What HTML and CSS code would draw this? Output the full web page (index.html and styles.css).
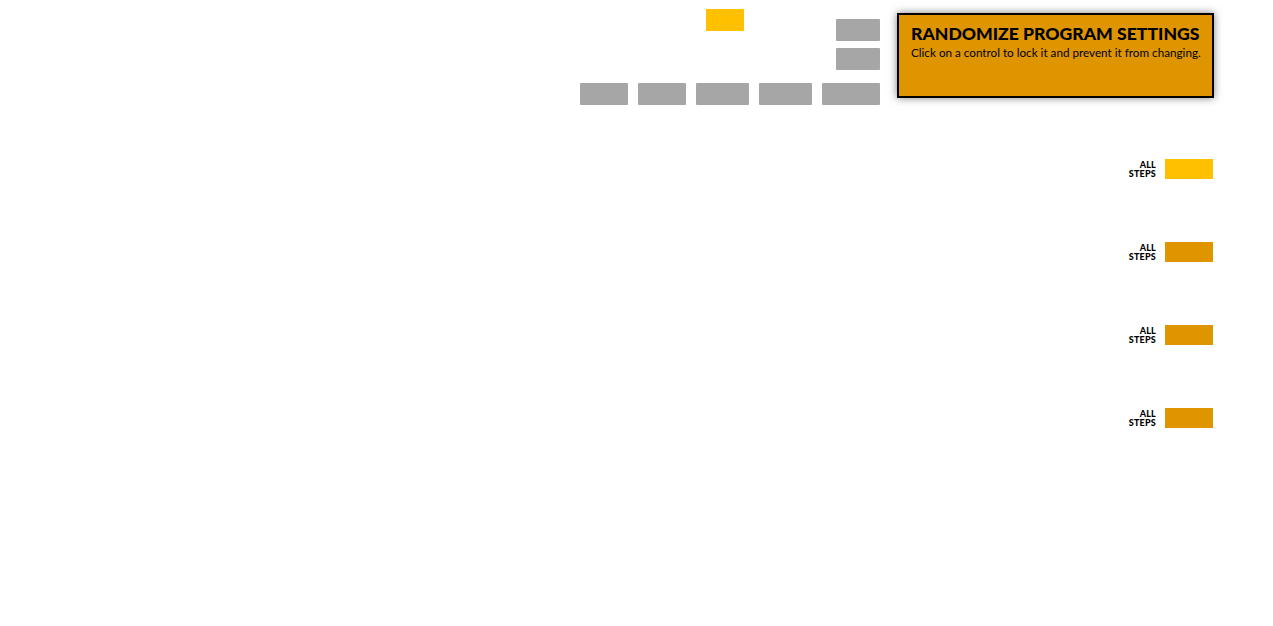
FILE: index.html
```html
<!DOCTYPE html>
<html>
<head>
<meta charset="utf-8">
<link rel="stylesheet" href="styles.css">
</head>
<body>
<div class="page">
  <div class="top">
    <div class="cluster">
      <div class="upper">
        <div class="btn yellow"></div>
        <div class="stack">
          <div class="btn gray w44"></div>
          <div class="btn gray w44"></div>
        </div>
      </div>
      <div class="row">
        <div class="btn gray w48"></div>
        <div class="btn gray w48"></div>
        <div class="btn gray w53"></div>
        <div class="btn gray w53"></div>
        <div class="btn gray w58"></div>
      </div>
    </div>
    <div class="panel">
      <div class="title">RANDOMIZE PROGRAM SETTINGS</div>
      <div class="sub">Click on a control to lock it and prevent it from changing.</div>
    </div>
  </div>
  <div class="steps">
    <div class="step"><div class="lbl">ALL<br>STEPS</div><div class="box bright"></div></div>
    <div class="step"><div class="lbl">ALL<br>STEPS</div><div class="box"></div></div>
    <div class="step"><div class="lbl">ALL<br>STEPS</div><div class="box"></div></div>
    <div class="step"><div class="lbl">ALL<br>STEPS</div><div class="box"></div></div>
  </div>
</div>
</body>
</html>
```

FILE: styles.css
```css
html, body {
  margin: 0;
  padding: 0;
  background: #ffffff;
}
.page {
  width: 1273px;
  height: 626px;
  font-family: "Lato", "Liberation Sans", sans-serif;
}
.top {
  display: flex;
  padding-left: 580px;
}
.cluster {
  width: 300px;
  padding-top: 9px;
  display: flex;
  flex-direction: column;
}
.upper {
  display: flex;
  align-items: flex-start;
}
.btn {
  height: 22px;
  border-radius: 1px;
}
.yellow {
  width: 38px;
  background: #ffc000;
  margin-left: 126px;
}
.gray {
  background: #a6a6a6;
}
.stack {
  margin-left: auto;
  margin-top: 10px;
  display: flex;
  flex-direction: column;
  gap: 7px;
}
.w44 { width: 44px; }
.w48 { width: 48px; }
.w53 { width: 53px; }
.w58 { width: 58px; }
.row {
  display: flex;
  gap: 10px;
  margin-top: 13px;
}
.panel {
  margin-left: 17px;
  margin-top: 13px;
  width: 313px;
  height: 81px;
  border: 2px solid #000;
  background: #de9500;
  box-shadow: 0 0 8px rgba(0,0,0,0.5);
  box-sizing: content-box;
  padding: 0;
}
.title {
  margin: 9px 0 0 12px;
  font-weight: 900;
  font-size: 17.6px;
  line-height: 20px;
  color: #000;
  white-space: nowrap;
}
.sub {
  margin: 1px 0 0 12px;
  font-size: 11.7px;
  line-height: 14px;
  color: #000;
  white-space: nowrap;
}
.steps {
  display: flex;
  flex-direction: column;
  align-items: flex-end;
  padding-right: 60px;
  margin-top: 54px;
  gap: 63px;
}
.step {
  display: flex;
  align-items: center;
  gap: 9px;
  height: 20px;
}
.lbl {
  font-weight: 900;
  font-size: 9px;
  line-height: 9px;
  letter-spacing: 0.2px;
  text-align: right;
  color: #000;
}
.box {
  width: 48px;
  height: 20px;
  background: #de9500;
}
.box.bright {
  background: #ffc000;
}
```
